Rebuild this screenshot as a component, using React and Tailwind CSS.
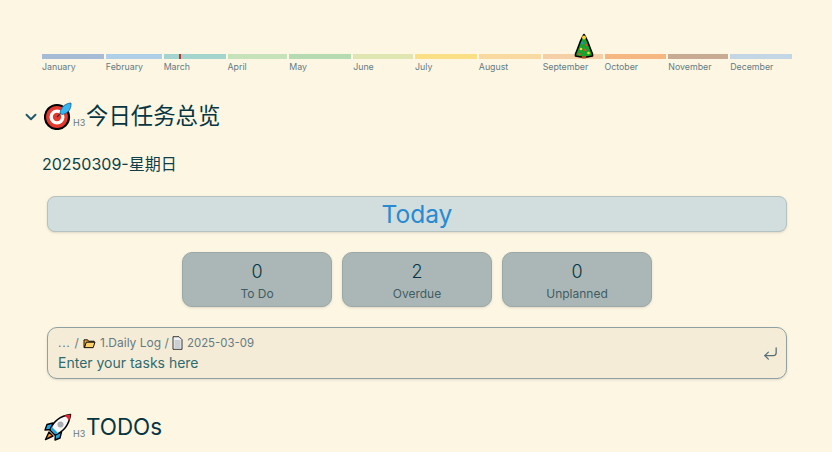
import React from 'react'
import { CornerDownLeft, ChevronDown } from 'lucide-react'

const months = [
  { name: 'January', color: 'bg-[#a6bcd6]' },
  { name: 'February', color: 'bg-[#afcfe8]' },
  { name: 'March', color: 'bg-[#a3d4cd]', today: true },
  { name: 'April', color: 'bg-[#c6e2b8]' },
  { name: 'May', color: 'bg-[#b7dbb0]' },
  { name: 'June', color: 'bg-[#dfe6b2]' },
  { name: 'July', color: 'bg-[#fbdf85]' },
  { name: 'August', color: 'bg-[#f8d9a0]' },
  { name: 'September', color: 'bg-[#f5cfa6]' },
  { name: 'October', color: 'bg-[#f5b682]' },
  { name: 'November', color: 'bg-[#c9aa92]' },
  { name: 'December', color: 'bg-[#c3d6e6]' },
]

const stats = [
  { value: '0', label: 'To Do' },
  { value: '2', label: 'Overdue' },
  { value: '0', label: 'Unplanned' },
]

const TreeIcon = () => (
  <svg viewBox="0 0 20 26" className="w-[20px] h-[26px]">
    <path d="M10 1.5 L12 5 L13.5 8 L15 12 L16.5 16 L18.5 21 L18.5 23 L13 24 L7 24 L1.5 23 L1.5 21 L3.5 16 L5 12 L6.5 8 L8 5 Z" fill="#18a32e" stroke="#000" strokeWidth="1.6" strokeLinejoin="round" />
    <rect x="8" y="23" width="4" height="2.5" fill="#a5521e" />
    <circle cx="10" cy="4.5" r="2" fill="#fbd62e" />
    <circle cx="8" cy="10" r="1.2" fill="#2f8fd8" />
    <circle cx="12" cy="12" r="1.2" fill="#e5482d" />
    <circle cx="7" cy="16" r="1.3" fill="#fbd62e" />
    <circle cx="11" cy="17" r="1.3" fill="#e5482d" />
    <circle cx="14.5" cy="20" r="1.3" fill="#fbd62e" />
    <circle cx="5.5" cy="21" r="1.2" fill="#e5482d" />
  </svg>
)

const TargetIcon = () => (
  <svg viewBox="0 0 28 28" className="w-[28px] h-[28px]">
    <circle cx="13" cy="15" r="12" fill="#e5392f" stroke="#000" strokeWidth="2.2" />
    <circle cx="13" cy="15" r="7.5" fill="#fff" />
    <circle cx="13" cy="15" r="4.2" fill="#e5392f" />
    <path d="M13 15 L20 8" stroke="#333" strokeWidth="1.2" />
    <path d="M16 11 C17 5 21 1.5 27 1 C27.5 7 24 11.5 18 12.5 Z" fill="#36b5ee" stroke="#12628f" strokeWidth="0.8" />
  </svg>
)

const RocketIcon = () => (
  <svg viewBox="0 0 28 28" className="w-[28px] h-[28px]">
    <path d="M5 19 L1.5 26.5 L9 23 Z" fill="#f5902e" stroke="#000" strokeWidth="1.4" strokeLinejoin="round" />
    <path d="M9 10 L3 11.5 L1 17 L7 16.5 Z" fill="#1ea5e6" stroke="#000" strokeWidth="1.4" strokeLinejoin="round" />
    <path d="M17.5 19 L16 25 L11 27 L11.5 21 Z" fill="#1ea5e6" stroke="#000" strokeWidth="1.4" strokeLinejoin="round" />
    <path d="M6 17 C9 9 16 3 26.5 1.5 C25 12 19 19 11 22 Z" fill="#f7f7f7" stroke="#000" strokeWidth="1.6" strokeLinejoin="round" />
    <path d="M6.6 16.2 L11.8 21.4 L14.2 20.2 L7.8 13.8 Z" fill="#1ea5e6" />
    <path d="M20 2.8 C22 3.5 24.5 6 25 8 C26 6 26.4 3.5 26.5 1.5 C24.5 1.7 22 2.2 20 2.8 Z" fill="#e5232d" />
    <circle cx="16.5" cy="11.5" r="3" fill="#a9adb2" />
  </svg>
)

const FolderIcon = () => (
  <svg viewBox="0 0 14 12" className="w-[13px] h-[11px]">
    <path d="M1 2 H5 L6 3.5 H12 V5 H4 L1.5 10.5 H1 Z" fill="#f2a93b" stroke="#000" strokeWidth="1" strokeLinejoin="round" />
    <path d="M3.5 4.5 H13 L11 10.5 H1.5 Z" fill="#fcd268" stroke="#000" strokeWidth="1" strokeLinejoin="round" />
  </svg>
)

const PageIcon = () => (
  <svg viewBox="0 0 11 14" className="w-[11px] h-[14px]">
    <path d="M1 0.7 H7 L10 3.7 V13.3 H1 Z" fill="#eef1f3" stroke="#222" strokeWidth="0.9" />
    <path d="M2.5 5 H8.5 M2.5 7 H8.5 M2.5 9 H8.5 M2.5 11 H8.5" stroke="#8a9096" strokeWidth="0.7" />
  </svg>
)

const Heading = ({ icon, children }) => (
  <div className="flex items-center h-[30px] pl-[2px]">
    {icon}
    <span className="self-end mb-[2px] ml-[1px] w-[13px] text-[9px] leading-[12px] text-[#657b83]">H3</span>
    <h3 className="text-[22.4px] leading-[30px] font-normal text-[#073642]">{children}</h3>
  </div>
)

export default function App() {
  return (
    <div className="w-[832px] h-[452px] overflow-hidden bg-[#fdf6e3] pl-[42px] pr-[40px] pt-[54px] text-[#073642] font-['Inter','Noto_Sans_CJK_SC',sans-serif]">
      <div className="relative grid grid-cols-[31fr_28fr_31fr_30fr_31fr_30fr_31fr_31fr_30fr_31fr_30fr_31fr] gap-x-[2px]">
        {months.map((m) => (
          <div key={m.name}>
            <div className={`relative h-[5px] ${m.color}`}>
              {m.today && <div className="absolute left-[15px] top-0 w-[2px] h-[5px] bg-[#c0342c]" />}
            </div>
            <div className="mt-[2px] text-[8.8px] leading-[12px] text-[#657b83]">{m.name}</div>
          </div>
        ))}
        <div className="absolute left-[532px] top-[-21px]">
          <TreeIcon />
        </div>
      </div>

      <div className="relative mt-[28px]">
        <ChevronDown className="absolute left-[-20px] top-[7px] w-[18px] h-[18px] text-[#1f5a66]" strokeWidth={2.6} />
        <Heading icon={<TargetIcon />}>今日任务总览</Heading>
      </div>

      <p className="mt-[21px] text-[16px] leading-[24px] text-[#0f3f4b]">20250309-星期日</p>

      <div className="mx-[5px] mt-[20px] h-[36px] rounded-[8px] border border-[#b4c2c2] bg-[#d2dddd] shadow-sm flex items-center justify-center text-[24.5px] text-[#268bd2]">
        Today
      </div>

      <div className="mx-[5px] mt-[20px] flex justify-center gap-[10px]">
        {stats.map((s) => (
          <div key={s.label} className="w-[150px] h-[55px] rounded-[10px] border border-[#9aa8a8] bg-[#abb7b6] shadow-sm flex flex-col items-center pt-[7px]">
            <span className="text-[18px] leading-[24px] font-light text-[#073642]">{s.value}</span>
            <span className="mt-[2px] text-[12px] leading-[16px] text-[#3f5c63]">{s.label}</span>
          </div>
        ))}
      </div>

      <div className="mx-[5px] mt-[20px] h-[52px] rounded-[10px] border border-[#8fa1a3] bg-[#f5ecd7] shadow-sm relative pl-[10px] pt-[7px]">
        <div className="flex items-center gap-[4px] text-[12px] leading-[16px] text-[#657b83]">
          <span className="w-[19px] mr-[2px] whitespace-nowrap tracking-[0.7px]">... /</span>
          <FolderIcon />
          <span className="w-[68px] whitespace-nowrap">1.Daily Log /</span>
          <PageIcon />
          <span className="text-[11.4px]">2025-03-09</span>
        </div>
        <div className="mt-[3px] text-[14px] leading-[18px] text-[#2e6b70]">Enter your tasks here</div>
        <CornerDownLeft className="absolute right-[7px] top-[17px] w-[17px] h-[17px] text-[#586e75]" strokeWidth={1.8} />
      </div>

      <div className="mt-[33px]">
        <Heading icon={<RocketIcon />}>TODOs</Heading>
      </div>
    </div>
  )
}
